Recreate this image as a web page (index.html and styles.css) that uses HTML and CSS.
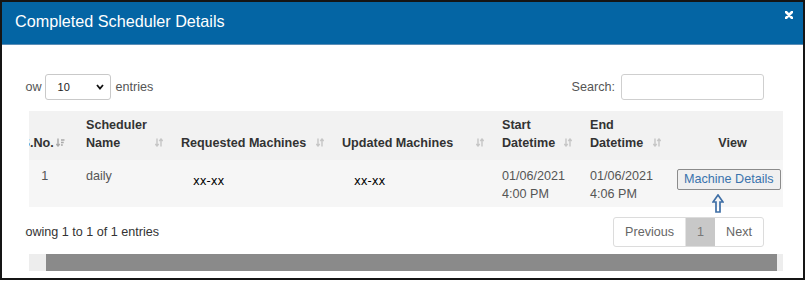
FILE: index.html
```html
<!DOCTYPE html>
<html lang="en">
<head>
  <meta charset="UTF-8">
  <title>Completed Scheduler Details</title>
  <link rel="stylesheet" href="styles.css">
</head>
<body>
  <div class="modal">
    <div class="modal-header">
      <h4 class="modal-title">Completed Scheduler Details</h4>
      <span class="close">
        <svg width="8" height="8" viewBox="0 0 8 8"><path d="M1 1 L7 7 M7 1 L1 7" stroke="#fff" stroke-width="2.6" stroke-linecap="round"/></svg>
      </span>
    </div>

    <div class="modal-body">
      <div class="body-clip">
        <div class="dt-top">
          <div class="dt-length">
            <span>Show</span>
            <span class="select-box">
              <span>10</span>
              <svg width="8" height="6" viewBox="0 0 8 6"><path d="M1 1 L4 4.5 L7 1" stroke="#111" stroke-width="1.8" fill="none"/></svg>
            </span>
            <span class="entries">entries</span>
          </div>
          <div class="dt-filter">
            <span>Search:</span>
            <input type="search" class="search-input">
          </div>
        </div>

        <div class="dt-scroll">
          <table class="dt-table">
            <colgroup>
              <col class="c-no">
              <col class="c-name">
              <col class="c-req">
              <col class="c-upd">
              <col class="c-start">
              <col class="c-end">
              <col class="c-view">
            </colgroup>
            <thead>
              <tr>
                <th>
                  <div class="th-in th-tight">
                    <span>S.No.</span>
                    <svg class="sort" width="9" height="9" viewBox="0 0 9 9"><path d="M2 0.5 V8 M0.3 6 L2 8 L3.7 6" stroke="#a9a9a9" stroke-width="1.4" fill="none"/><path d="M5 2 H8.5 M5 4.5 H7.7 M5 7 H6.8" stroke="#a9a9a9" stroke-width="1.3"/></svg>
                  </div>
                </th>
                <th>
                  <div class="th-in">
                    <span>Scheduler<br>Name</span>
                    <svg class="sort" width="8" height="9" viewBox="0 0 8 9"><path d="M2 0.5 V8 M0.3 6 L2 8 L3.7 6 M6 8.5 V1 M4.3 3 L6 1 L7.7 3" stroke="#c6c6c6" stroke-width="1.4" fill="none"/></svg>
                  </div>
                </th>
                <th>
                  <div class="th-in">
                    <span>Requested Machines</span>
                    <svg class="sort" width="8" height="9" viewBox="0 0 8 9"><path d="M2 0.5 V8 M0.3 6 L2 8 L3.7 6 M6 8.5 V1 M4.3 3 L6 1 L7.7 3" stroke="#c6c6c6" stroke-width="1.4" fill="none"/></svg>
                  </div>
                </th>
                <th>
                  <div class="th-in">
                    <span>Updated Machines</span>
                    <svg class="sort" width="8" height="9" viewBox="0 0 8 9"><path d="M2 0.5 V8 M0.3 6 L2 8 L3.7 6 M6 8.5 V1 M4.3 3 L6 1 L7.7 3" stroke="#c6c6c6" stroke-width="1.4" fill="none"/></svg>
                  </div>
                </th>
                <th>
                  <div class="th-in">
                    <span>Start<br>Datetime</span>
                    <svg class="sort" width="8" height="9" viewBox="0 0 8 9"><path d="M2 0.5 V8 M0.3 6 L2 8 L3.7 6 M6 8.5 V1 M4.3 3 L6 1 L7.7 3" stroke="#c6c6c6" stroke-width="1.4" fill="none"/></svg>
                  </div>
                </th>
                <th>
                  <div class="th-in">
                    <span>End<br>Datetime</span>
                    <svg class="sort" width="8" height="9" viewBox="0 0 8 9"><path d="M2 0.5 V8 M0.3 6 L2 8 L3.7 6 M6 8.5 V1 M4.3 3 L6 1 L7.7 3" stroke="#c6c6c6" stroke-width="1.4" fill="none"/></svg>
                  </div>
                </th>
                <th class="th-view">View</th>
              </tr>
            </thead>
            <tbody>
              <tr>
                <td class="td-no">1</td>
                <td>daily</td>
                <td><span class="mono">xx-xx</span></td>
                <td><span class="mono">xx-xx</span></td>
                <td>01/06/2021<br>4:00 PM</td>
                <td>01/06/2021<br>4:06 PM</td>
                <td class="td-view">
                  <button class="btn-details">Machine Details</button>
                  <svg class="pointer" width="12" height="19" viewBox="0 0 12 19"><path d="M6 1 L11 8 L8 8 L8 18 L4 18 L4 8 L1 8 Z" stroke="#3f6fa6" stroke-width="1.7" fill="none"/></svg>
                </td>
              </tr>
            </tbody>
          </table>
        </div>

        <div class="dt-bottom">
          <div class="dt-info">Showing 1 to 1 of 1 entries</div>
          <ul class="pagination">
            <li class="prev">Previous</li>
            <li class="active">1</li>
            <li class="next">Next</li>
          </ul>
        </div>

        <div class="scrollbar">
          <span class="sb-btn"></span>
          <span class="sb-thumb"></span>
          <span class="sb-rest"></span>
        </div>
      </div>
    </div>
  </div>
</body>
</html>
```
FILE: styles.css
```css
body {
  margin: 0;
  background: #fff;
  font-family: "Liberation Sans", Arial, sans-serif;
  font-size: 12.6px;
  color: #333;
}
.modal {
  width: 805px;
  height: 280px;
  box-sizing: border-box;
  border: 2px solid #151515;
  overflow: hidden;
}
.modal-header {
  height: 43px;
  box-sizing: border-box;
  background: #0465a4;
  border-bottom: 1px solid #5a8db6;
  padding: 9px 10px 0 13px;
  display: flex;
  justify-content: space-between;
  align-items: flex-start;
}
.modal-title {
  margin: 0;
  color: #fff;
  font-size: 16.2px;
  font-weight: normal;
  line-height: 20px;
}
.close {
  display: block;
  line-height: 0;
}
.modal-body {
  padding: 29px 20px 0 23px;
}
.body-clip {
  overflow: hidden;
}
.dt-top {
  margin: 0 19px 0 -15px;
  height: 26px;
  display: flex;
  justify-content: space-between;
  align-items: center;
  color: #555;
}
.dt-length, .dt-filter {
  display: flex;
  align-items: center;
  white-space: nowrap;
}
.select-box {
  width: 66px;
  height: 26px;
  box-sizing: border-box;
  border: 1px solid #c9c9c9;
  border-radius: 3px;
  margin: 0 5px 0 3px;
  padding: 0 6px 0 12px;
  display: flex;
  justify-content: space-between;
  align-items: center;
  font-size: 11px;
  color: #222;
}
.search-input {
  width: 143px;
  height: 26px;
  box-sizing: border-box;
  border: 1px solid #cfcfcf;
  border-radius: 3px;
  margin: 0 0 0 6px;
  padding: 0 6px;
}
.dt-scroll {
  margin: 11px 0 0 4px;
  overflow-x: clip;
  overflow-y: visible;
}
.dt-table {
  margin-left: -16.4px;
  width: 770.4px;
  table-layout: fixed;
  border-collapse: collapse;
}
.c-no { width: 64.4px; }
.c-name { width: 95px; }
.c-req { width: 161px; }
.c-upd { width: 160px; }
.c-start { width: 88px; }
.c-end { width: 89px; }
.c-view { width: 113px; }
.dt-table th {
  background: #f2f2f2;
  text-align: left;
  vertical-align: bottom;
  padding: 5px 9px 8px;
  line-height: 18px;
  font-weight: bold;
  color: #333;
}
.th-in {
  display: flex;
  justify-content: space-between;
  align-items: flex-end;
}
.th-tight {
  justify-content: flex-start;
  gap: 2px;
}
.sort {
  flex: none;
  margin-bottom: 5px;
}
.dt-table th.th-view {
  text-align: center;
  padding-left: 21px;
}
.dt-table td {
  background: #f6f6f6;
  vertical-align: top;
  padding: 7px 9px 4px;
  line-height: 18px;
  color: #555;
}
.dt-table td.td-no {
  text-align: center;
}
.mono {
  display: block;
  padding: 5px 0 0 12px;
  font-family: "DejaVu Sans", Verdana, sans-serif;
  font-size: 11.5px;
  color: #000;
}
.dt-table td.td-view {
  position: relative;
  padding-left: 7px;
  padding-right: 0;
  white-space: nowrap;
}
.btn-details {
  margin-top: 2px;
  height: 21px;
  padding: 0 6px;
  border: 1px solid #8c8c8c;
  border-radius: 2px;
  background: #f0f0f0;
  color: #3a73ad;
  font-family: inherit;
  font-size: 12.6px;
  line-height: 19px;
  white-space: nowrap;
}
.pointer {
  position: absolute;
  left: 42px;
  top: 34px;
}
.dt-bottom {
  margin: 10px 19px 0 -15px;
  height: 30px;
  display: flex;
  justify-content: space-between;
  align-items: center;
}
.dt-info {
  color: #333;
}
.pagination {
  list-style: none;
  margin: 0;
  padding: 0;
  display: flex;
  border: 1px solid #dcdcdc;
  border-radius: 3px;
}
.pagination li {
  padding: 0 11px;
  line-height: 28px;
  color: #666;
}
.pagination .prev {
  border-right: 1px solid #e4e4e4;
}
.pagination .active {
  background: #c8c8c8;
  color: #777;
}
.scrollbar {
  margin: 7px 0 0 4px;
  height: 17px;
  display: flex;
}
.sb-btn {
  width: 17px;
  background: #ededed;
}
.sb-thumb {
  width: 731px;
  background: #8a8a8a;
}
.sb-rest {
  flex: 1;
  background: #ededed;
}
```
